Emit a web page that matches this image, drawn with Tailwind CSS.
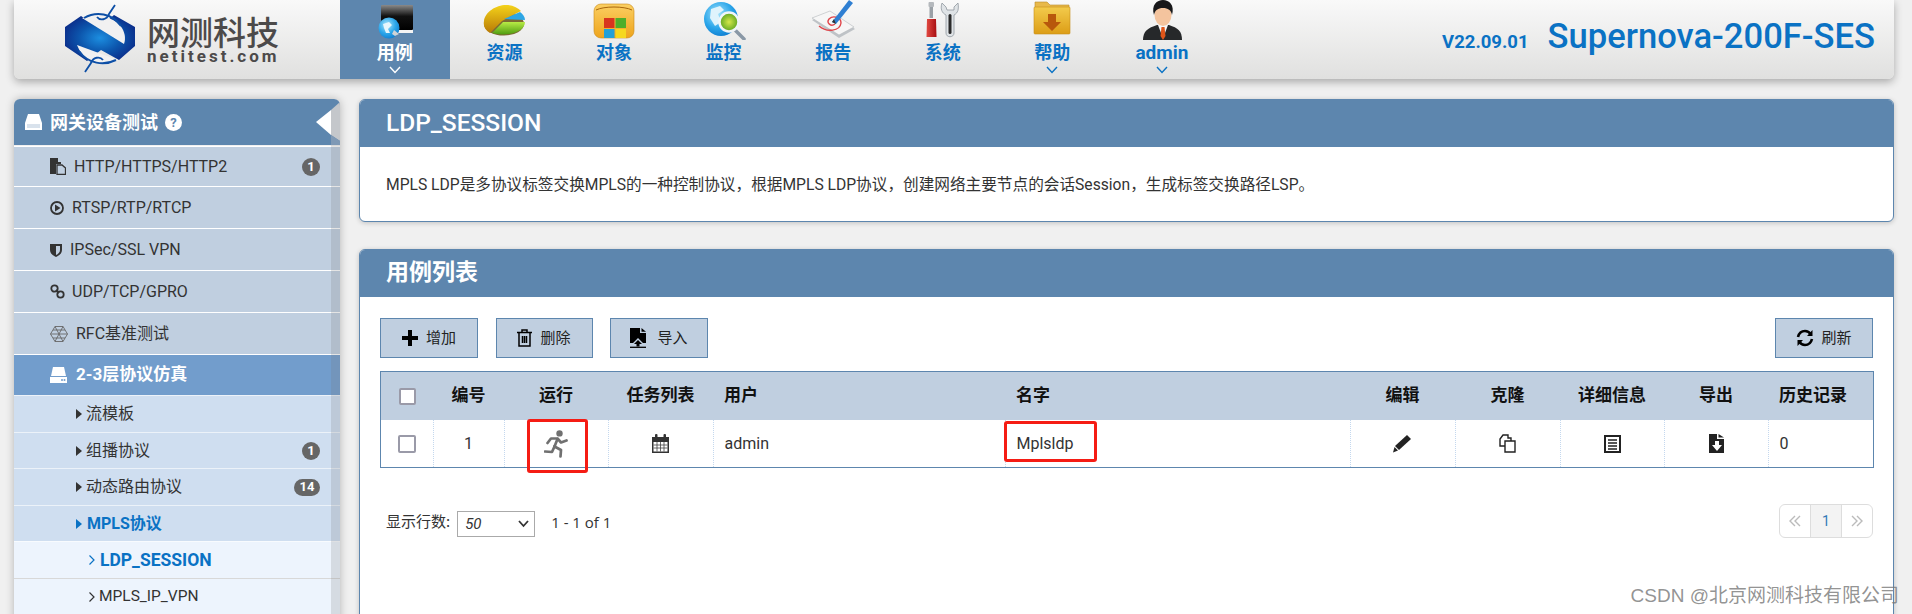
<!DOCTYPE html>
<html lang="zh-CN">
<head>
    <meta charset="UTF-8">
    <title>LDP_SESSION</title>
    <script src="https://cdn.jsdelivr.net/npm/@tailwindcss/browser@4"></script>
</head>
<body class="bg-[#f0f0f0] text-[#333] font-['Roboto','Noto_Sans_CJK_SC',sans-serif]">
<svg class="absolute w-0 h-0">
    <defs>
        <radialGradient id="logoBlue" cx="50%" cy="50%" r="55%"><stop offset="0" stop-color="#1c8ee0"/><stop offset="0.55" stop-color="#0c55ac"/><stop offset="1" stop-color="#0b2d8a"/></radialGradient>
        <linearGradient id="screen" x1="0" y1="0" x2="0" y2="1"><stop offset="0" stop-color="#8a8a8a"/><stop offset="0.45" stop-color="#111"/><stop offset="1" stop-color="#000"/></linearGradient>
        <radialGradient id="globe" cx="40%" cy="35%" r="70%"><stop offset="0" stop-color="#a8e4fb"/><stop offset="0.6" stop-color="#2ba6ea"/><stop offset="1" stop-color="#0f7cd0"/></radialGradient>
        <linearGradient id="pieYellow" x1="0" y1="0" x2="0" y2="1"><stop offset="0" stop-color="#f4d21a"/><stop offset="1" stop-color="#b87a06"/></linearGradient>
        <linearGradient id="pieGreen" x1="0" y1="0" x2="0" y2="1"><stop offset="0" stop-color="#b8ec46"/><stop offset="1" stop-color="#4f9c10"/></linearGradient>
        <linearGradient id="box" x1="0" y1="0" x2="0" y2="1"><stop offset="0" stop-color="#fbcf62"/><stop offset="1" stop-color="#eea41c"/></linearGradient>
        <radialGradient id="lens" cx="50%" cy="50%" r="55%"><stop offset="0" stop-color="#d6e84a"/><stop offset="1" stop-color="#4f9e1c"/></radialGradient>
        <linearGradient id="folder" x1="0" y1="0" x2="0" y2="1"><stop offset="0" stop-color="#f3cb4c"/><stop offset="1" stop-color="#dc9d16"/></linearGradient>
        <linearGradient id="redGrip" x1="0" y1="0" x2="1" y2="0"><stop offset="0" stop-color="#e24a42"/><stop offset="1" stop-color="#a80f12"/></linearGradient>
    </defs>
</svg>

<div class="relative h-[614px] w-[1912px] overflow-hidden">
    <!-- top bar -->
    <header class="ml-[14px] w-[1880px] h-[79px] flex rounded-b-[6px] bg-linear-to-b from-[#f9f9f9] to-[#e0e0df] shadow-[0_3px_8px_rgba(0,0,0,0.3)]">
        <div class="w-[326px] relative">
            <div class="flex items-center pl-[50px] h-full">
                <svg width="73" height="78" viewBox="15 0 73 78" class="-mt-[1px] shrink-0">
                    <polygon points="16,27 32,16 50,28 65,15 86,27 86,46 70,60 52,50 38,61 16,46" fill="url(#logoBlue)"/>
                    <path d="M33,18 L75,44 C80,30 66,10 33,18Z" fill="#f1f1f1"/>
                    <path d="M35,18 C47,11 63,13 72,26" fill="none" stroke="#0d4fa6" stroke-width="2"/>
                    <path d="M48,17 C51,21 58,20 60,14 L66,5" fill="none" stroke="#0d4fa6" stroke-width="1.8"/>
                    <path d="M28,45 L69,60 C58,68 36,66 28,45Z" fill="#f1f1f1"/>
                    <path d="M67,60 C55,66 39,64 30,51" fill="none" stroke="#0d4fa6" stroke-width="2"/>
                    <path d="M54,60 C51,56 44,57 42,63 L36,72" fill="none" stroke="#0d4fa6" stroke-width="1.8"/>
                </svg>
                <div class="ml-[10px] w-[132px] text-[#4c4a4a]">
                    <div class="text-[33px] leading-[32px] font-medium font-['Noto_Sans_CJK_SC',sans-serif] whitespace-nowrap">网测科技</div>
                    <div class="mt-[2px] text-[17px] leading-[15px] font-bold tracking-[3px] whitespace-nowrap">netitest.com</div>
                </div>
            </div>
        </div>
        <nav class="flex h-full">
            <a class="w-[109.6px] h-full flex flex-col items-center bg-[#5d86ae] text-white">
                <svg width="60" height="40" viewBox="0 0 60 40">
                    <rect x="27" y="26" width="21" height="7" fill="#f4f4f4"/>
                    <rect x="16" y="5" width="32" height="25" rx="1" fill="url(#screen)"/>
                    <circle cx="24" cy="28" r="10.5" fill="url(#globe)"/>
                    <path d="M18,24 L24,22 L27,25 L23,29 L25,33 L21,33 L19,28Z" fill="#e6f6fd"/>
                    <path d="M29,30 L34,34 L30,36 L27,34Z" fill="#cfd3d6"/>
                </svg>
                <span class="text-[18px] leading-[25px] font-bold">用例</span>
                <svg class="mt-[1px]" width="12" height="8" viewBox="0 0 12 8"><path d="M1,1 L6,6.5 L11,1" fill="none" stroke="#fff" stroke-width="1.4"/></svg>
            </a>
            <a class="w-[109.6px] flex flex-col items-center text-[#0a72c4]">
                <svg width="60" height="40" viewBox="0 0 60 40">
                    <ellipse cx="30" cy="24" rx="20" ry="11.5" fill="#7c6a32"/>
                    <path d="M10,21 C11,12 22,5 32,5 C39,5 44,8 47,11 L28,21 L16,33 C11,30 9,26 10,21Z" fill="url(#pieYellow)"/>
                    <path d="M30,19 L46,12 C49,14 51,17 51,20Z" fill="#2ea6e4"/>
                    <path d="M29,22 L51,22 C51,28 44,33 35,34 C28,35 22,34 18,33Z" fill="url(#pieGreen)"/>
                </svg>
                <span class="text-[18px] leading-[25px] font-bold">资源</span>
            </a>
            <a class="w-[109.6px] flex flex-col items-center text-[#0a72c4]">
                <svg width="60" height="40" viewBox="0 0 60 40">
                    <rect x="10" y="4" width="40" height="34" rx="7" fill="url(#box)" stroke="#c98a18" stroke-width="0.6"/>
                    <path d="M12,10 C20,6 40,6 48,10" fill="none" stroke="#a8660e" stroke-width="1"/>
                    <rect x="20" y="18" width="10.5" height="10" fill="#d8351e"/>
                    <rect x="31.5" y="18" width="10.5" height="10" fill="#4fae2a"/>
                    <rect x="20" y="29" width="10.5" height="9" fill="#22a0d8"/>
                    <rect x="31.5" y="29" width="10.5" height="9" fill="#f5d81e"/>
                </svg>
                <span class="text-[18px] leading-[25px] font-bold">对象</span>
            </a>
            <a class="w-[109.6px] flex flex-col items-center text-[#0a72c4]">
                <svg width="60" height="40" viewBox="0 0 60 40">
                    <circle cx="27" cy="19" r="17" fill="url(#globe)"/>
                    <path d="M17,9 L26,6 L30,10 L24,14 L27,22 L21,26 L16,18Z" fill="#dff3fc"/>
                    <path d="M41,30 L50,39" stroke="#8a98a6" stroke-width="3.5" stroke-linecap="round"/>
                    <circle cx="35" cy="22" r="9.5" fill="url(#lens)" stroke="#f0f4f8" stroke-width="2.5"/>
                </svg>
                <span class="text-[18px] leading-[25px] font-bold">监控</span>
            </a>
            <a class="w-[109.6px] flex flex-col items-center text-[#0a72c4]">
                <svg width="60" height="40" viewBox="0 0 60 40">
                    <polygon points="9,20 27,12 52,29 36,38" fill="#bfc3c7"/>
                    <polygon points="9,18 27,11 51,27 36,35" fill="#f6f6f6" stroke="#b4b8bc" stroke-width="0.6"/>
                    <path d="M16,26 C24,33 37,31 38,23 C38,17 30,15 26,19 C23,23 28,27 32,24" fill="none" stroke="#e0454a" stroke-width="1.4"/>
                    <path d="M29,22 L33,24 L50,3 L46,0Z" fill="#2f7fd2"/>
                    <path d="M29,22 L31,19 L33,24Z" fill="#333"/>
                </svg>
                <span class="text-[18px] leading-[25px] font-bold">报告</span>
            </a>
            <a class="w-[109.6px] flex flex-col items-center text-[#0a72c4]">
                <svg width="60" height="40" viewBox="0 0 60 40">
                    <rect x="16.5" y="2" width="3.5" height="16" fill="#9aa0a6"/>
                    <rect x="15.5" y="2" width="5.5" height="5" rx="1" fill="#b5b9bd"/>
                    <path d="M14,19 L23,19 L23.5,37 L13.5,37Z" fill="url(#redGrip)"/>
                    <path d="M29,3 C27,9 29,13 33,15 L33,33 C33,38 41,38 41,33 L41,15 C45,13 46,9 45,3 L41,7 L41,10 L34,10 L33,7Z" fill="#dfe3e6" stroke="#8f979e" stroke-width="0.8"/>
                    <rect x="35.5" y="14" width="3" height="20" rx="1.5" fill="#2a2a2a"/>
                </svg>
                <span class="text-[18px] leading-[25px] font-bold">系统</span>
            </a>
            <a class="w-[109.6px] flex flex-col items-center text-[#0a72c4]">
                <svg width="60" height="40" viewBox="0 0 60 40">
                    <path d="M13,2 L25,2 L28,5 L47,5 L47,10 L13,10Z" fill="#e8b94a" stroke="#b98a2a" stroke-width="0.6"/>
                    <rect x="12" y="7" width="36" height="27" rx="1" fill="url(#folder)" stroke="#c68d1a" stroke-width="0.6"/>
                    <path d="M26,14 L34,14 L34,22 L39,22 L30,31 L21,22 L26,22Z" fill="#b8580c"/>
                </svg>
                <span class="text-[18px] leading-[25px] font-bold">帮助</span>
                <svg class="mt-[1px]" width="12" height="8" viewBox="0 0 12 8"><path d="M1,1 L6,6.5 L11,1" fill="none" stroke="#0a72c4" stroke-width="1.4"/></svg>
            </a>
            <a class="w-[109.6px] flex flex-col items-center text-[#0a72c4]">
                <svg width="60" height="40" viewBox="0 0 60 40">
                    <path d="M11,40 C11,31 16,28 25,25 L37,25 C46,28 50,31 50,40Z" fill="#26282a"/>
                    <polygon points="26,25 36,25 33,33 29,33" fill="#f6f6f6"/>
                    <polygon points="29.5,27 32.5,27 33.5,36 31,40 28.5,36" fill="#e0561a"/>
                    <ellipse cx="31" cy="15" rx="8.5" ry="11" fill="#f4c49e"/>
                    <path d="M22,15 C19,5 25,0 31,0 C37,0 43,5 40,15 C39,10 36,8 31,8 C26,8 23,10 22,15Z" fill="#18181a"/>
                </svg>
                <span class="text-[19px] leading-[25px] font-bold">admin</span>
                <svg class="mt-[1px]" width="12" height="8" viewBox="0 0 12 8"><path d="M1,1 L6,6.5 L11,1" fill="none" stroke="#0a72c4" stroke-width="1.4"/></svg>
            </a>
        </nav>
        <div class="ml-auto flex items-baseline pr-[19px] pt-[17px] text-[#0a72c4] whitespace-nowrap">
            <span class="text-[18.5px] font-bold mr-[19px]">V22.09.01</span>
            <span class="text-[34.6px] leading-[38px] font-medium">Supernova-200F-SES</span>
        </div>
    </header>

    <div class="flex ml-[14px] mt-[20px] gap-[19px]">
        <!-- sidebar -->
        <aside class="relative w-[326px] h-[560px] overflow-hidden rounded-t-[6px] shadow-[0_0_8px_rgba(0,0,0,0.25)]">
            <div class="h-[46px] bg-[#5d86ae] text-white flex items-center pl-[11px] text-[18px] font-bold">
                <svg class="mr-[8px]" width="17" height="16" viewBox="0 0 17 16"><path d="M3,0 L14,0 L17,9 L17,16 L0,16 L0,9Z" fill="#fff"/><path d="M2,11 L15,11 M2,13 L15,13" stroke="#9fb6cf" stroke-width="0.8"/></svg>
                <span>网关设备测试</span>
                <svg class="ml-[7px]" width="17" height="17" viewBox="0 0 17 17"><circle cx="8.5" cy="8.5" r="8.5" fill="#fff"/><text x="8.5" y="13" text-anchor="middle" font-size="13" font-weight="700" fill="#5d86ae" font-family="Roboto">?</text></svg>
            </div>
            <ul class="text-[16px] text-[#333]">
                <li class="h-[40px] mt-[1px] border-t border-white bg-[#c0cfe0] flex items-center pl-[36px] pr-[20px]">
                    <svg class="mr-[8px]" width="16" height="17" viewBox="0 0 16 17"><path d="M0,0 L8,0 L8,4 L11,4 L11,6 L6,6 L6,16 L0,16Z" fill="#333"/><path d="M7,7 L12,7 L15.5,10 L15.5,16.5 L7,16.5Z" fill="none" stroke="#333" stroke-width="1.3"/></svg>
                    <span>HTTP/HTTPS/HTTP2</span>
                    <span class="ml-auto w-[18px] h-[18px] rounded-full bg-[#666] text-white text-[13px] font-bold flex items-center justify-center">1</span>
                </li>
                <li class="h-[42px] border-t border-white bg-[#c0cfe0] flex items-center pl-[36px]">
                    <svg class="mr-[8px]" width="14" height="14" viewBox="0 0 14 14"><circle cx="7" cy="7" r="6" fill="none" stroke="#333" stroke-width="1.8"/><path d="M5,3.5 L10.5,7 L5,10.5Z" fill="#333"/></svg>
                    <span>RTSP/RTP/RTCP</span>
                </li>
                <li class="h-[42px] border-t border-white bg-[#c0cfe0] flex items-center pl-[36px]">
                    <svg class="mr-[8px]" width="12" height="14" viewBox="0 0 12 14"><path d="M0,1 L12,1 L12,7 C12,11 8,13 6,14 C4,13 0,11 0,7Z" fill="#333"/><path d="M6,3 L10,3 L10,7 C10,9.5 8,11 6,12Z" fill="#c0cfe0"/></svg>
                    <span>IPSec/SSL VPN</span>
                </li>
                <li class="h-[42px] border-t border-white bg-[#c0cfe0] flex items-center pl-[36px]">
                    <svg class="mr-[7px]" width="15" height="15" viewBox="0 0 15 15" fill="none" stroke="#333" stroke-width="1.8"><circle cx="4.5" cy="4.5" r="3.2"/><circle cx="10.5" cy="10.5" r="3.2"/><path d="M6,6 L9,9"/></svg>
                    <span>UDP/TCP/GPRO</span>
                </li>
                <li class="h-[42px] border-t border-white bg-[#c0cfe0] flex items-center pl-[36px]">
                    <svg class="mr-[8px]" width="18" height="16" viewBox="0 0 18 16" fill="none" stroke="#666" stroke-width="0.9"><polygon points="5,0.5 13,0.5 17.5,8 13,15.5 5,15.5 0.5,8"/><path d="M5,0.5 L13,15.5 M13,0.5 L5,15.5 M0.5,8 L17.5,8 M3,4 L15,4 M3,12 L15,12"/></svg>
                    <span>RFC基准测试</span>
                </li>
                <li class="h-[41px] border-t border-white bg-[#729dcc] text-white flex items-center pl-[36px] text-[17px] font-bold">
                    <svg class="mr-[9px]" width="17" height="16" viewBox="0 0 17 16"><path d="M3,0 L14,0 L16,9 L1,9Z" fill="#fff"/><path d="M0,10 L17,10 L17,16 L0,16Z" fill="#fff"/><circle cx="12" cy="13" r="1" fill="#729dcc"/><circle cx="14.5" cy="13" r="1" fill="#729dcc"/></svg>
                    <span>2-3层协议仿真</span>
                </li>
                <li class="h-[37px] border-t border-white/60 bg-[#cfdef0] flex items-center pl-[62px]">
                    <svg class="mr-[4px]" width="6" height="10" viewBox="0 0 6 10"><path d="M0,0 L6,5 L0,10Z" fill="#333"/></svg>
                    <span>流模板</span>
                </li>
                <li class="h-[36px] border-t border-white/60 bg-[#cfdef0] flex items-center pl-[62px] pr-[20px]">
                    <svg class="mr-[4px]" width="6" height="10" viewBox="0 0 6 10"><path d="M0,0 L6,5 L0,10Z" fill="#333"/></svg>
                    <span>组播协议</span>
                    <span class="ml-auto w-[18px] h-[18px] rounded-full bg-[#666] text-white text-[13px] font-bold flex items-center justify-center">1</span>
                </li>
                <li class="h-[37px] border-t border-white/60 bg-[#cfdef0] flex items-center pl-[62px] pr-[20px]">
                    <svg class="mr-[4px]" width="6" height="10" viewBox="0 0 6 10"><path d="M0,0 L6,5 L0,10Z" fill="#333"/></svg>
                    <span>动态路由协议</span>
                    <span class="ml-auto w-[26px] h-[17px] rounded-full bg-[#666] text-white text-[13px] font-bold flex items-center justify-center">14</span>
                </li>
                <li class="h-[36px] border-t border-white/60 bg-[#cfdef0] flex items-center pl-[62px] font-bold text-[#0a72c4]">
                    <svg class="mr-[5px]" width="6" height="10" viewBox="0 0 6 10"><path d="M0,0 L6,5 L0,10Z" fill="#0a72c4"/></svg>
                    <span>MPLS协议</span>
                </li>
                <li class="h-[37px] border-t border-white/60 bg-[#edf4fd] flex items-center pl-[75px] text-[17.5px] font-bold text-[#0a72c4]">
                    <svg class="mr-[5px]" width="6" height="10" viewBox="0 0 6 10"><path d="M0.5,0.5 L5,5 L0.5,9.5" fill="none" stroke="#0a72c4" stroke-width="1.2"/></svg>
                    <span>LDP_SESSION</span>
                </li>
                <li class="h-[37px] border-t border-[#d8d8d8] bg-[#edf4fd] flex items-center pl-[75px] text-[15.5px]">
                    <svg class="mr-[4px]" width="6" height="10" viewBox="0 0 6 10"><path d="M0.5,0.5 L5,5 L0.5,9.5" fill="none" stroke="#333" stroke-width="1.2"/></svg>
                    <span>MPLS_IP_VPN</span>
                </li>
            </ul>
            <!-- collapse rail and arrow over the menu -->
            <div class="absolute right-0 top-[46px] bottom-0 w-[9px] bg-[#777]/20"></div>
            <svg class="absolute right-0 top-0" width="24" height="46" viewBox="0 0 24 46">
                <polygon points="15,11 24,3 24,42 15,36" fill="#c4c7cb"/>
                <polygon points="15,36 24,42 24,46 15,46" fill="#7f99b5"/>
                <polygon points="0,23 15,11 15,36" fill="#fff"/>
            </svg>
        </aside>

        <!-- main column -->
        <main class="w-[1535px] flex flex-col gap-[27px]">
            <section class="h-[123px] bg-white border border-[#5d86ae] rounded-[6px] overflow-hidden shadow-[0_1px_5px_rgba(0,0,0,0.2)]">
                <h2 class="h-[47px] bg-[#5d86ae] text-white text-[24.5px] font-medium flex items-center pl-[26px]">LDP_SESSION</h2>
                <p class="h-[75px] flex items-center pl-[26px] text-[15.65px] text-[#333]">MPLS LDP是多协议标签交换MPLS的一种控制协议，根据MPLS LDP协议，创建网络主要节点的会话Session，生成标签交换路径LSP。</p>
            </section>

            <section class="relative h-[380px] bg-white border border-[#5d86ae] rounded-t-[6px] overflow-hidden shadow-[0_1px_5px_rgba(0,0,0,0.2)]">
                <h2 class="h-[47px] bg-[#5d86ae] text-white text-[23px] font-bold flex items-center pl-[26px]">用例列表</h2>
                <div class="px-[20px] pt-[21px]">
                    <div class="flex gap-[17.5px] text-[15px] text-[#222]">
                        <button class="w-[98px] h-[40px] border border-[#5d86ae] bg-[#c0cfe0] flex items-center justify-center gap-[8px]">
                            <svg width="16" height="16" viewBox="0 0 16 16"><path d="M6,0 L10,0 L10,6 L16,6 L16,10 L10,10 L10,16 L6,16 L6,10 L0,10 L0,6 L6,6Z" fill="#000"/></svg>增加
                        </button>
                        <button class="w-[97px] h-[40px] border border-[#5d86ae] bg-[#c0cfe0] flex items-center justify-center gap-[8px]">
                            <svg width="15" height="18" viewBox="0 0 15 18" fill="none" stroke="#000" stroke-width="1.5"><path d="M0,3.5 L15,3.5"/><path d="M5,3 L5,1 L10,1 L10,3"/><path d="M2,4 L2,17 L13,17 L13,4"/><path d="M5.5,7 L5.5,14 M7.5,7 L7.5,14 M9.5,7 L9.5,14"/></svg>删除
                        </button>
                        <button class="w-[98px] h-[40px] border border-[#5d86ae] bg-[#c0cfe0] flex items-center justify-center gap-[11px]">
                            <svg width="16" height="20" viewBox="0 0 16 20"><path d="M0,0 L10,0 L10,5 L16,5 L16,15 L13,15 L8,10 L3,15 L0,15Z" fill="#000"/><path d="M11.5,0 L16,3.8 L11.5,3.8Z" fill="#000"/><path d="M8,12 L12,16 L9.5,16 L9.5,18.5 L6.5,18.5 L6.5,16 L4,16Z" fill="#000"/><path d="M0,19.3 L16,19.3" stroke="#000" stroke-width="1.3"/></svg>导入
                        </button>
                        <button class="ml-auto w-[98px] h-[40px] border border-[#5d86ae] bg-[#c0cfe0] flex items-center justify-center gap-[7px]">
                            <svg width="18" height="18" viewBox="0 0 18 18" fill="none" stroke="#000" stroke-width="2.6"><path d="M2,8 C3,4 6,2 9,2 C12,2 14,4 15,5.5"/><path d="M16,10 C15,14 12,16 9,16 C6,16 4,14 3,12.5"/><path d="M16.5,1 L16.5,7 L11,7Z" fill="#000" stroke="none"/><path d="M1.5,17 L1.5,11 L7,11Z" fill="#000" stroke="none"/></svg>刷新
                        </button>
                    </div>

                    <div class="mt-[13px] w-[1494px] border border-[#5d86ae]">
                        <table class="w-full table-fixed border-collapse text-[16px]">
                            <colgroup>
                                <col class="w-[52px]"><col class="w-[71px]"><col class="w-[104px]"><col class="w-[105px]"><col class="w-[292px]"><col class="w-[345px]"><col class="w-[105px]"><col class="w-[105px]"><col class="w-[104px]"><col class="w-[104px]"><col>
                            </colgroup>
                            <thead>
                                <tr class="h-[48px] bg-[#c0cfe0] text-[#111] text-[17px] font-bold">
                                    <th class="text-center"><span class="inline-block align-middle w-[17px] h-[17px] bg-white border-2 border-[#9a9aa8] rounded-[2px]"></span></th>
                                    <th>编号</th>
                                    <th>运行</th>
                                    <th>任务列表</th>
                                    <th class="text-left pl-[11px]">用户</th>
                                    <th class="text-left pl-[11px]">名字</th>
                                    <th>编辑</th>
                                    <th>克隆</th>
                                    <th>详细信息</th>
                                    <th>导出</th>
                                    <th class="text-left pl-[11px]">历史记录</th>
                                </tr>
                            </thead>
                            <tbody>
                                <tr class="h-[47px] text-[#333]">
                                    <td class="text-center border-r border-dotted border-[#c4d8ee]"><span class="inline-block align-middle w-[18px] h-[18px] bg-white border-2 border-[#9a9aa8] rounded-[2px]"></span></td>
                                    <td class="text-center border-r border-dotted border-[#c4d8ee]">1</td>
                                    <td class="border-r border-dotted border-[#c4d8ee]">
                                        <svg class="mx-auto" width="24" height="28" viewBox="0 0 24 28" fill="none" stroke="#707070" stroke-width="2.7" stroke-linejoin="round" stroke-linecap="round"><circle cx="15.5" cy="3.4" r="3.2" fill="#707070" stroke="none"/><path d="M13.5,9 L10.5,16.5"/><path d="M3.5,13 L7,8.5 L13.5,8.5 L17,12.5 L22.5,10.5"/><path d="M10.5,16.5 L17,20 L16.5,26.5"/><path d="M10.5,16.5 L8,22 L1,21.5"/></svg>
                                    </td>
                                    <td class="border-r border-dotted border-[#c4d8ee]">
                                        <svg class="mx-auto" width="17" height="19" viewBox="0 0 17 19"><path d="M0,3 L17,3 L17,19 L0,19Z" fill="#333"/><rect x="3" y="0" width="2.5" height="5" rx="1" fill="#333"/><rect x="11.5" y="0" width="2.5" height="5" rx="1" fill="#333"/><path d="M1.5,8 L15.5,8 L15.5,17.5 L1.5,17.5Z" fill="#fff"/><path d="M1.5,11 L15.5,11 M1.5,14 L15.5,14 M5,8 L5,17.5 M8.5,8 L8.5,17.5 M12,8 L12,17.5" stroke="#444" stroke-width="0.8"/></svg>
                                    </td>
                                    <td class="pl-[11px] border-r border-dotted border-[#c4d8ee]">admin</td>
                                    <td class="pl-[11px] border-r border-dotted border-[#c4d8ee]">Mplsldp</td>
                                    <td class="border-r border-dotted border-[#c4d8ee]">
                                        <svg class="mx-auto" width="19" height="19" viewBox="0 0 19 19"><path d="M14,1 L18,5 L6,16 L2,12Z" fill="#222"/><path d="M1.5,13 L5,16.5 L0,18.5Z" fill="#222"/></svg>
                                    </td>
                                    <td class="border-r border-dotted border-[#c4d8ee]">
                                        <svg class="mx-auto" width="19" height="19" viewBox="0 0 19 19" fill="#fff" stroke="#222" stroke-width="1.4"><path d="M5,1 L10,1 L10,4 L13,4 L13,12 L2,12 L2,5Z"/><path d="M7,7 L17,7 L17,18 L7,18Z"/></svg>
                                    </td>
                                    <td class="border-r border-dotted border-[#c4d8ee]">
                                        <svg class="mx-auto" width="17" height="18" viewBox="0 0 17 18"><rect width="17" height="18" fill="#222"/><rect x="2" y="2" width="13" height="14" fill="#fff"/><path d="M4,5 L13,5 M4,8 L13,8 M4,11 L13,11 M4,14 L13,14" stroke="#222" stroke-width="1.4"/></svg>
                                    </td>
                                    <td class="border-r border-dotted border-[#c4d8ee]">
                                        <svg class="mx-auto" width="15" height="19" viewBox="0 0 15 19"><path d="M0,0 L8,0 L8,5 L15,5 L15,19 L0,19Z" fill="#222"/><path d="M9.5,0 L15,3.5 L9.5,3.5Z" fill="#222"/><path d="M6,7 L10,7 L10,11 L13,11 L8,17 L3,11 L6,11Z" fill="#fff"/></svg>
                                    </td>
                                    <td class="pl-[11px]">0</td>
                                </tr>
                            </tbody>
                        </table>
                    </div>

                    <div class="relative mt-[36px] flex items-start text-[15px] text-[#333]">
                        <label class="font-['Noto_Sans_CJK_SC',sans-serif] ml-[6px] mt-[6px]">显示行数:</label>
                        <div class="relative ml-[7px] w-[78px] h-[26px] mt-[7px]">
                            <select class="appearance-none w-full h-full border border-[#aaa] bg-white italic pl-[7px] text-[15px]"><option>50</option></select>
                            <svg class="absolute right-[6px] top-[9px]" width="11" height="8" viewBox="0 0 11 8"><path d="M1,1 L5.5,6 L10,1" fill="none" stroke="#333" stroke-width="1.8"/></svg>
                        </div>
                        <span class="ml-[16px] mt-[7px] font-['Open_Sans',sans-serif]">1 - 1 of 1</span>
                        <div class="ml-auto flex h-[34px] w-[94px] border border-[#ddd] rounded-[6px] overflow-hidden text-[14px]">
                            <span class="flex-1 flex items-center justify-center border-r border-[#ddd]"><svg width="12" height="12" viewBox="0 0 12 12" fill="none" stroke="#bbb" stroke-width="1.4"><path d="M6,1 L1,6 L6,11 M11,1 L6,6 L11,11"/></svg></span>
                            <span class="flex-1 flex items-center justify-center border-r border-[#ddd] bg-[#f3f3f3] text-[#337ab7]">1</span>
                            <span class="flex-1 flex items-center justify-center"><svg width="12" height="12" viewBox="0 0 12 12" fill="none" stroke="#bbb" stroke-width="1.4"><path d="M1,1 L6,6 L1,11 M6,1 L11,6 L6,11"/></svg></span>
                        </div>
                    </div>
                </div>
            </section>
        </main>
    </div>

    <!-- red annotation boxes drawn over the table -->
    <div class="absolute left-[527px] top-[419px] w-[61px] h-[54px] border-[3px] border-[#f51c14] rounded-[3px]"></div>
    <div class="absolute left-[1004px] top-[421px] w-[93px] h-[41px] border-[3px] border-[#f51c14] rounded-[3px]"></div>
    <!-- watermark -->
    <div class="absolute right-[13px] top-[583px] text-[19px] leading-[26px] text-[#777]/80 whitespace-nowrap font-['Liberation_Sans','Noto_Sans_CJK_SC',sans-serif]">CSDN @北京网测科技有限公司</div>
</div>
</body>
</html>
